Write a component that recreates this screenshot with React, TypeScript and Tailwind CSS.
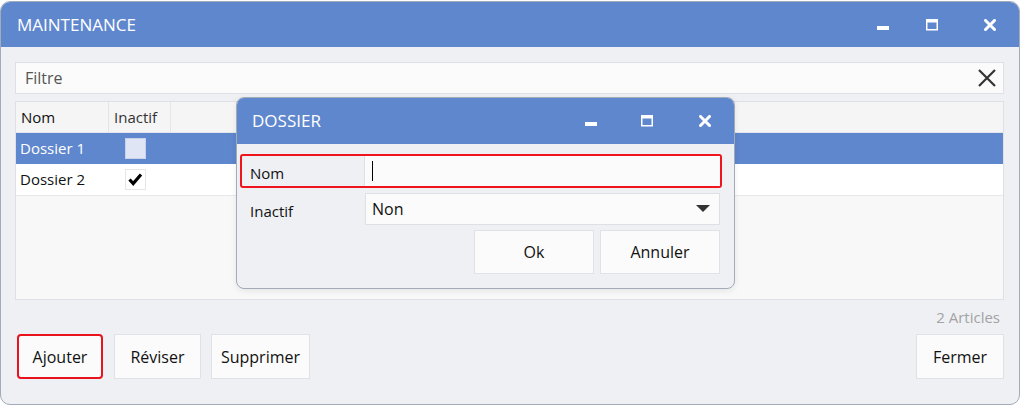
import React from "react"

const font = { fontFamily: '"Open Sans", "Noto Sans", sans-serif' }

function MinIcon() {
  return (
    <svg width="12" height="12" viewBox="0 0 12 12">
      <rect x="0" y="7" width="12" height="4" fill="white" />
    </svg>
  )
}

function MaxIcon() {
  return (
    <svg width="12" height="12" viewBox="0 0 12 12">
      <rect x="0.75" y="0.75" width="10.5" height="10" fill="none" stroke="white" strokeWidth="1.5" />
      <rect x="0" y="0" width="12" height="3.5" fill="white" />
    </svg>
  )
}

function CloseIcon() {
  return (
    <svg width="12" height="12" viewBox="0 0 12 12">
      <path d="M1.5 1.5 L10.5 10.5 M10.5 1.5 L1.5 10.5" stroke="white" strokeWidth="3" strokeLinecap="square" />
    </svg>
  )
}

function Check() {
  return (
    <svg width="15" height="13" viewBox="0 0 15 13">
      <path d="M1.5 6.5 L5.2 10.5 L13 1.5" fill="none" stroke="black" strokeWidth="3.2" />
    </svg>
  )
}

export default function App() {
  return (
    <div className="w-[1020px] h-[405px] bg-white relative text-[#111]" style={font}>
      <div className="mt-px h-[404px] rounded-[10px] border border-[#a3abb8] overflow-hidden bg-[#eef0f4] flex flex-col">
        <div className="h-[45px] bg-[#5f87cd] flex items-center text-white shrink-0">
          <span className="pl-4 text-[17px] flex-1">MAINTENANCE</span>
          <span className="w-[24px] mr-[25px] flex justify-center"><MinIcon /></span>
          <span className="w-[24px] mr-[34px] flex justify-center"><MaxIcon /></span>
          <span className="w-[24px] mr-[17px] flex justify-center"><CloseIcon /></span>
        </div>

        <div className="flex-1 flex flex-col px-[14px] pt-[15px]">
          <div className="h-[32px] bg-[#fbfbfb] border border-[#dde0e5] flex items-center pl-[9px] pr-[6px] mr-[1px]">
            <span className="flex-1 text-[16px] text-[#555]">Filtre</span>
            <svg width="20" height="20" viewBox="0 0 20 20">
              <path d="M2 2 L18 18 M18 2 L2 18" stroke="#333" strokeWidth="2.2" />
            </svg>
          </div>

          <div className="mt-[7px] h-[199px] bg-[#f8f8f8] border border-[#dde0e5] mr-[1px] flex flex-col text-[15px]">
            <div className="h-[31px] flex bg-[#f5f5f5] border-b border-[#e3e5e9]">
              <div className="w-[93px] border-r border-[#e3e5e9] flex items-center pl-[5px]">Nom</div>
              <div className="w-[62px] border-r border-[#e3e5e9] flex items-center pl-[5px] text-[#333]">Inactif</div>
            </div>
            <div className="h-[31px] flex bg-[#5f87cd] text-white">
              <div className="w-[93px] flex items-center pl-[4px]">Dossier 1</div>
              <div className="w-[62px] flex items-center pl-[16px]">
                <div className="w-[21px] h-[21px] bg-[#dfe5f5] border border-[#c9d2ea]" />
              </div>
            </div>
            <div className="h-[32px] flex bg-white border-b border-[#e6e8ec]">
              <div className="w-[93px] flex items-center pl-[4px]">Dossier 2</div>
              <div className="w-[62px] flex items-center pl-[16px]">
                <div className="w-[21px] h-[21px] bg-white border border-[#e4e6ea] flex items-center justify-center">
                  <Check />
                </div>
              </div>
            </div>
          </div>

          <div className="h-[34px] flex items-center justify-end pr-[5px] text-[15px] text-[#a3a3a3]">2 Articles</div>

          <div className="flex gap-[11px] text-[16px]">
            <button className="w-[86px] h-[45px] ml-[2px] bg-[#fbfbfb] border-2 border-[#e8131c] rounded-[4px]">Ajouter</button>
            <button className="w-[87px] h-[45px] bg-[#fbfbfb] border border-[#dfe2e6]">Réviser</button>
            <button className="w-[99px] h-[45px] -ml-[1px] bg-[#fbfbfb] border border-[#dfe2e6]">Supprimer</button>
            <div className="flex-1" />
            <button className="w-[88px] h-[45px] mr-[1px] bg-[#fbfbfb] border border-[#dfe2e6]">Fermer</button>
          </div>
        </div>
      </div>

      <div className="absolute left-[236px] top-[96px] w-[499px] h-[192px] rounded-[8px] border border-[#a3abb8] overflow-hidden bg-[#eef0f4] flex flex-col shadow-[0_2px_6px_rgba(0,0,0,0.08)]">
        <div className="h-[46px] bg-[#5f87cd] flex items-center text-white shrink-0">
          <span className="pl-[15px] text-[17px] flex-1">DOSSIER</span>
          <span className="w-[24px] mr-[32px] flex justify-center"><MinIcon /></span>
          <span className="w-[24px] mr-[34px] flex justify-center"><MaxIcon /></span>
          <span className="w-[24px] mr-[17px] flex justify-center"><CloseIcon /></span>
        </div>
        <div className="flex-1 flex flex-col pl-[3px] pr-[12px] pt-[10px] text-[15px]">
          <div className="h-[34px] flex border-2 border-[#f0141c] rounded-[3px]">
            <div className="w-[122px] flex items-center pl-[8px] pt-[4px]">Nom</div>
            <div className="flex-1 bg-[#fbfbfb] border-l border-[#dde0e5] flex items-center pl-[7px]">
              <div className="w-px h-[20px] bg-black" />
            </div>
          </div>
          <div className="h-[32px] mt-[5px] flex">
            <div className="w-[125px] flex items-center pl-[10px] pt-[4px]">Inactif</div>
            <div className="flex-1 bg-[#fbfbfb] border border-[#dde0e5] flex items-center pl-[6px] pr-[9px] text-[16px] mr-[2px]">
              <span className="flex-1">Non</span>
              <svg width="14" height="8" viewBox="0 0 14 8">
                <path d="M0 0 H14 L7 7 Z" fill="#333" />
              </svg>
            </div>
          </div>
          <div className="flex justify-end gap-[6px] mt-[5px] mr-[2px] text-[16px]">
            <button className="w-[120px] h-[44px] bg-[#fbfbfb] border border-[#dfe2e6]">Ok</button>
            <button className="w-[120px] h-[44px] bg-[#fbfbfb] border border-[#dfe2e6]">Annuler</button>
          </div>
        </div>
      </div>
    </div>
  )
}
